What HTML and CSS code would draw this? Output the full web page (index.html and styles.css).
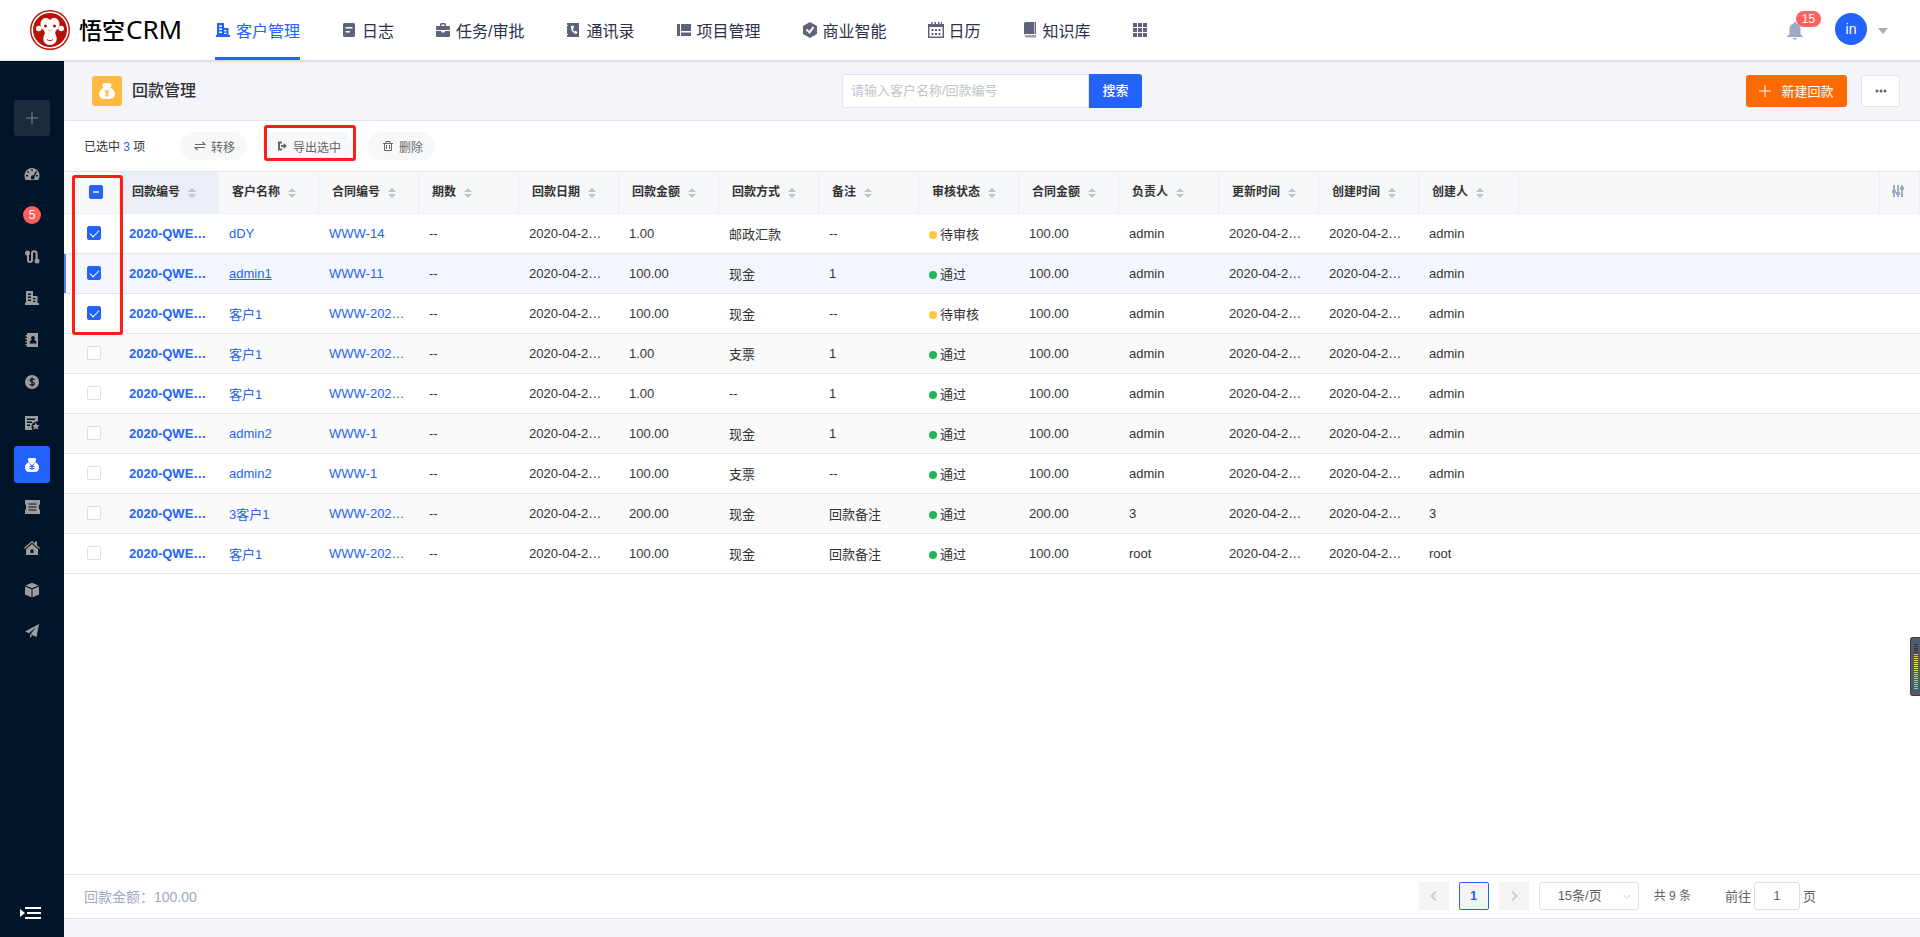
FILE: index.html
```html
<!DOCTYPE html>
<html lang="zh-CN">
<head>
  <meta charset="UTF-8">
  <title>回款管理 - 悟空CRM</title>
  <meta name="viewport" content="width=device-width, initial-scale=1.0">
  <link rel="stylesheet" href="styles.css">
</head>
<body>
  <header class="navbar">
    <a class="logo" href="#">
      <svg class="logo-img" viewBox="0 0 40 40">
        <circle cx="20" cy="20" r="20" fill="#b81208"/>
        <circle cx="20" cy="20" r="18.6" fill="#fff"/>
        <circle cx="20" cy="20" r="17" fill="#b81208"/>
        <circle cx="8.8" cy="18.5" r="2.8" fill="#fff"/>
        <circle cx="31.2" cy="18.5" r="2.8" fill="#fff"/>
        <path d="M20 10c-2-2.600-5.500-2.600-7.600-.6-2.600 2.600-2.400 7 0 9.600 1.500 1.500 2.600 2.500 2.400 4.200-.2 1.500-1.500 2.800-1.500 5.300 0 4 3 6.500 6.700 6.500s6.700-2.500 6.700-6.500c0-2.500-1.300-3.800-1.500-5.300-.2-1.700.9-2.700 2.400-4.200 2.400-2.600 2.600-7 0-9.600-2.100-2-5.600-2-7.600.6z" fill="#fff"/>
        <circle cx="15.500" cy="16" r="1.500" fill="#b81208"/>
        <circle cx="24.500" cy="16" r="1.500" fill="#b81208"/>
        <path d="M18.700 20.200l.7.5M21.300 20.200l-.7.500M17 29.500c1.600 1.600 4.400 1.600 6 0" fill="none" stroke="#b81208"/>
      </svg>
      <span class="logo-cn">悟空</span><span class="logo-en">CRM</span>
    </a>
    <nav class="nav">
      <a class="nav-item active" href="#">
        <svg class="nav-icon" viewBox="0 0 16 16" fill="currentColor"><path fill-rule="evenodd" d="M2 1h7v5h4.500v7H15v2H1v-2h1zM4 3.500V5h3V3.500zm0 3V8h3V6.500zm0 3V11h3V9.500zM9 8v1.200h2.500V8zm0 2.800V12h2.500v-1.200z"/></svg>
        客户管理
      </a>
      <a class="nav-item" href="#">
        <svg class="nav-icon" viewBox="0 0 16 16" fill="currentColor"><path fill-rule="evenodd" d="M3.500 1h9A1.500 1.500 0 0 1 14 2.500v11a1.500 1.500 0 0 1-1.500 1.500h-9A1.500 1.500 0 0 1 2 13.500v-11A1.500 1.500 0 0 1 3.500 1zM4.500 5v1.500h7V5zm0 4v1.500H9V9z"/></svg>
        日志
      </a>
      <a class="nav-item" href="#">
        <svg class="nav-icon" viewBox="0 0 16 16" fill="currentColor"><path fill-rule="evenodd" d="M5 4V2.500A1.500 1.500 0 0 1 6.500 1h3A1.500 1.500 0 0 1 11 2.500V4h3a1 1 0 0 1 1 1v3H1V5a1 1 0 0 1 1-1zm1.500 0h3V2.500h-3zM1 9h4.500l2.500 2 2.500-2H15v5a1 1 0 0 1-1 1H2a1 1 0 0 1-1-1z"/></svg>
        任务/审批
      </a>
      <a class="nav-item" href="#">
        <svg class="nav-icon" viewBox="0 0 16 16" fill="currentColor"><path fill-rule="evenodd" d="M2 1h12v14H2v-2h1v-1H2V4h1V3H2zm4 3c-.5 4 2 7.500 5.500 8l1-2-2-1.200-1 .7C8.500 8.700 8 7.800 8 6.500l1-.5-.5-2.500z"/></svg>
        通讯录
      </a>
      <a class="nav-item" href="#">
        <svg class="nav-icon" viewBox="0 0 16 16" fill="currentColor"><path d="M1 2h3v12H1zM5 2h10v7H5zM5 10.500h10V14H5z"/></svg>
        项目管理
      </a>
      <a class="nav-item" href="#">
        <svg class="nav-icon" viewBox="0 0 16 16"><path d="M8 0l7 4v8l-7 4-7-4V4z" fill="currentColor"/><path d="M4.500 7.500l3 3 4-5.500" fill="none" stroke="#fff" stroke-width="2"/></svg>
        商业智能
      </a>
      <a class="nav-item" href="#">
        <svg class="nav-icon" viewBox="0 0 16 16" fill="currentColor"><path fill-rule="evenodd" d="M0 2h3V0h1.500v2h2V0H8v2h2V0h1.500v2H13V0h1v2h2v14H0zm1.500 3v9.500h13V5z"/><path d="M3.500 7h2v2h-2zM7 7h2v2H7zM10.500 7h2v2h-2zM3.500 11h2v2h-2zM7 11h2v2H7zM10.500 11h2v2h-2z"/></svg>
        日历
      </a>
      <a class="nav-item" href="#">
        <svg class="nav-icon" viewBox="0 0 16 16" fill="currentColor"><path d="M3.500 0H12v12H4c-.8 0-1.500.2-2 .6V1.500A1.500 1.500 0 0 1 3.500 0zM12.600 0H14v12h-1.400z"/><path d="M14 13v2.500H3.800a1.300 1.300 0 0 1 0-2.500z" opacity=".6"/></svg>
        知识库
      </a>
      <a class="nav-item" href="#" aria-label="更多应用">
        <svg class="nav-icon" viewBox="0 0 16 16" fill="currentColor"><path d="M1 1h4v4H1zM6 1h4v4H6zM11 1h4v4h-4zM1 6h4v4H1zM6 6h4v4H6zM11 6h4v4h-4zM1 11h4v4H1zM6 11h4v4H6zM11 11h4v4h-4z"/></svg>
      </a>
    </nav>
    <div class="user">
      <button class="bell" aria-label="消息">
        <svg viewBox="0 0 16 18" width="16" height="18" fill="currentColor"><path d="M8 0c1 0 1.500.8 1.500 1.500C12 2.200 13.500 4 13.500 7v5l2.500 2.500v.5H0v-.5L2.500 12V7c0-3 1.500-4.800 4-5.500C6.500.8 7 0 8 0zM5.500 16h5L9 17.500H7z"/></svg>
        <span class="badge">15</span>
      </button>
      <button class="avatar">in</button>
      <i class="caret"></i>
    </div>
  </header>

  <div class="layout">
    <aside class="sidebar">
      <button class="side-add" aria-label="新建">
        <svg viewBox="0 0 12 12" width="12" height="12" fill="none" stroke="currentColor"><path d="M6 0v12M0 6h12"/></svg>
      </button>
      <nav class="side-list">
        <a class="side-item" href="#" aria-label="仪表盘"><svg viewBox="0 0 16 16" fill="currentColor"><path fill-rule="evenodd" d="M8 2a7.500 7.500 0 0 1 7.500 7.500c0 1.600-.4 3-1.200 4.500H1.700A8.500 8.500 0 0 1 .5 9.500 7.500 7.500 0 0 1 8 2zM7.200 3.500V5h1.600V3.500zM4 5L3 6l1.200 1.200 1-1zm8 0l-2.500 4.500a2 2 0 1 0 1 .8L13 6zM2 9v1.500h2V9zm10 0v1.500h2V9z"/></svg></a>
        <a class="side-item" href="#" aria-label="待办事项"><span class="side-badge">5</span></a>
        <a class="side-item" href="#" aria-label="线索"><svg viewBox="0 0 16 16" fill="none" stroke="currentColor" stroke-width="2"><path d="M4 3v8a2 2 0 0 0 4 0V4.500a2.300 2.300 0 0 1 4.600 0V12"/><circle cx="3.500" cy="4" r="1.500" fill="currentColor"/><circle cx="13" cy="12" r="1.500" fill="currentColor"/></svg></a>
        <a class="side-item" href="#" aria-label="客户"><svg viewBox="0 0 16 16" fill="currentColor"><path fill-rule="evenodd" d="M2 1h7v5h4.500v7H15v2H1v-2h1zM4 3.500V5h3V3.500zm0 3V8h3V6.500zm0 3V11h3V9.500zM9 8v1.200h2.500V8zm0 2.800V12h2.500v-1.200z"/></svg></a>
        <a class="side-item" href="#" aria-label="联系人"><svg viewBox="0 0 16 16" fill="currentColor"><path fill-rule="evenodd" d="M3 1h11v14H3v-1.500H1.500V12H3v-1.500H1.500V9H3V7.500H1.500V6H3V4.500H1.500V3H3zm6 3a2 2 0 0 0-1 3.700C6.500 8.200 5.500 9.500 5.500 11.500h7c0-2-1-3.300-2.500-3.800A2 2 0 0 0 9 4z"/></svg></a>
        <a class="side-item" href="#" aria-label="商机"><svg viewBox="0 0 16 16"><circle cx="8" cy="8" r="7" fill="currentColor"/><path d="M10.500 5.800C9.500 4.500 6 4.500 6 6.300S10.500 7.800 10.500 9.700 6.500 11.500 5.500 10M8 3.200v9.600" fill="none" stroke="#001529" stroke-width="1.200"/></svg></a>
        <a class="side-item" href="#" aria-label="合同"><svg viewBox="0 0 16 16" fill="currentColor"><path fill-rule="evenodd" d="M1 1h13v5.500c-3.500 0-6.500 2-6.500 5 0 1.200.3 2.500 1 3.500H1zm2 2.500V5h8V3.500zm0 3V8h5V6.500zm0 3V11h3V9.500z"/><path d="M11.800 7.500l1.200 2.400 2.700.3-2 1.800.6 2.700-2.500-1.400-2.500 1.400.6-2.700-1.500-1.800 2.200-.3z"/></svg></a>
        <a class="side-item active" href="#" aria-label="回款"><svg viewBox="0 0 16 16"><path d="M4 1.500C5 .8 11 .8 12 1.500v2L11 5c2.500 1 4 3.200 4 5.500 0 3-2 4.500-4 4.500H5c-2 0-4-1.500-4-4.500C1 8.200 2.500 6 5 5L4 3.500z" fill="currentColor"/><path d="M5.500 6.500L8 9l2.500-2.500M8 9v4M5.500 9.500h5M5.500 11.500h5" fill="none" stroke="#2362fb"/></svg></a>
        <a class="side-item" href="#" aria-label="发票"><svg viewBox="0 0 16 16" fill="currentColor"><path fill-rule="evenodd" d="M1 1h15v4l-1 1v4l1 1v4H1v-4l1-1V6L1 5zM4.500 4.500v1h8v-1zm0 3v1h8v-1zm0 3v1h8v-1z"/></svg></a>
        <a class="side-item" href="#" aria-label="公海"><svg viewBox="0 0 16 16" fill="currentColor"><path d="M8 .8l3 2.700V1.500h2v3.800l3 2.700-.8.900L8 2.500.8 8.900 0 8z"/><path fill-rule="evenodd" d="M8 4l6 5.300V15H2V9.300zM6.500 9.500v3.500h3V9.500z"/></svg></a>
        <a class="side-item" href="#" aria-label="产品"><svg viewBox="0 0 16 16" fill="currentColor"><path d="M8 .8l6.500 2.700L8 6.200 1.500 3.500zM1 4.500l6.500 2.800v8L1 12.500zM15 4.500L8.500 7.300v8l6.500-2.800z"/></svg></a>
        <a class="side-item" href="#" aria-label="营销"><svg viewBox="0 0 16 16" fill="currentColor"><path d="M15 1L1 8.500l4 1.700 7-6-5.500 7 6 2.800zM6 11.500V15l2.200-2.600z"/></svg></a>
      </nav>
      <button class="side-toggle" aria-label="展开菜单">
        <svg viewBox="0 0 22 12" width="22" height="12" fill="currentColor"><path d="M0 2l5 4-5 4zM5 0h16v2H5zM7 5h14v2H7zM5 10h16v2H5z"/></svg>
      </button>
    </aside>

    <main class="main">
      <div class="page-head">
        <div class="page-title">
          <span class="title-icon">
            <svg viewBox="0 0 16 16" width="18" height="18"><path d="M4 1.500C5 .8 11 .8 12 1.500v2L11 5c2.500 1 4 3.200 4 5.500 0 3-2 4.500-4 4.500H5c-2 0-4-1.500-4-4.500C1 8.200 2.500 6 5 5L4 3.500z" fill="#fff"/><path d="M6 7l2 2 2-2M8 9v4M6 9.500h4M6 11.500h4" fill="none" stroke="#ffb940"/></svg>
          </span>
          <h1>回款管理</h1>
        </div>
        <form class="search">
          <input type="text" placeholder="请输入客户名称/回款编号" aria-label="搜索回款">
          <button type="button">搜索</button>
        </form>
        <div class="page-actions">
          <button class="btn-primary">
            <svg viewBox="0 0 12 12" width="12" height="12" fill="none" stroke="currentColor"><path d="M6 0v12M0 6h12"/></svg>
            新建回款
          </button>
          <button class="btn-more" aria-label="更多">
            <svg viewBox="0 0 12 4" width="12" height="4" fill="currentColor"><circle cx="2" cy="2" r="1.500"/><circle cx="6" cy="2" r="1.500"/><circle cx="10" cy="2" r="1.500"/></svg>
          </button>
        </div>
      </div>

      <section class="content">
        <div class="toolbar">
          <div class="selected">已选中 <b>3</b> 项</div>
          <button class="tool-btn">
            <svg viewBox="0 0 12 12" fill="none" stroke="currentColor" stroke-width="1.200"><path d="M1 4.500h10L8.500 2M11 7.500H1L3.500 10"/></svg>
            转移
          </button>
          <button class="tool-btn marked">
            <svg viewBox="0 0 12 12" fill="currentColor"><path d="M6 1.500H2v9h4v-2H4v-5h2zM7.500 3L11 6 7.500 9V7H5V5h2.500z"/></svg>
            导出选中
          </button>
          <button class="tool-btn">
            <svg viewBox="0 0 12 12" fill="none" stroke="currentColor"><path d="M1 3.500h10M4 3V1.500h4V3M2.500 3.500v7h7v-7M4.500 5v4M7.500 5v4"/></svg>
            删除
          </button>
        </div>

        <div class="table-wrap">
          <table class="table">
            <colgroup>
              <col class="col-check">
              <col span="14" class="col-data">
              <col>
              <col class="col-set">
            </colgroup>
            <thead>
              <tr>
                <th><input type="checkbox" class="check part" aria-label="全选"></th>
                <th class="sorted">回款编号<button class="sort" aria-label="排序"></button></th>
                <th>客户名称<button class="sort" aria-label="排序"></button></th>
                <th>合同编号<button class="sort" aria-label="排序"></button></th>
                <th>期数<button class="sort" aria-label="排序"></button></th>
                <th>回款日期<button class="sort" aria-label="排序"></button></th>
                <th>回款金额<button class="sort" aria-label="排序"></button></th>
                <th>回款方式<button class="sort" aria-label="排序"></button></th>
                <th>备注<button class="sort" aria-label="排序"></button></th>
                <th>审核状态<button class="sort" aria-label="排序"></button></th>
                <th>合同金额<button class="sort" aria-label="排序"></button></th>
                <th>负责人<button class="sort" aria-label="排序"></button></th>
                <th>更新时间<button class="sort" aria-label="排序"></button></th>
                <th>创建时间<button class="sort" aria-label="排序"></button></th>
                <th>创建人<button class="sort" aria-label="排序"></button></th>
                <th></th>
                <th class="set-cell">
                  <button class="set-btn" aria-label="字段设置">
                    <svg viewBox="0 0 12 12" width="12" height="12" fill="currentColor"><path d="M1 0h2v12H1zM5 0h2v12H5zM9 0h2v12H9zM0 5h4v3H0zM4 7h4v3H4zM8 2h4v3H8z"/></svg>
                  </button>
                </th>
              </tr>
            </thead>
            <tbody>
              <tr>
                <td><input type="checkbox" class="check" aria-label="选择" checked></td>
                <td><a href="#">2020-QWE…</a></td><td><a href="#">dDY</a></td><td><a href="#">WWW-14</a></td>
                <td>--</td><td>2020-04-2…</td><td>1.00</td><td>邮政汇款</td><td>--</td>
                <td><i class="dot wait"></i>待审核</td><td>100.00</td><td>admin</td>
                <td>2020-04-2…</td><td>2020-04-2…</td><td>admin</td><td></td><td></td>
              </tr>
              <tr class="hover">
                <td><input type="checkbox" class="check" aria-label="选择" checked></td>
                <td><a href="#">2020-QWE…</a></td><td><a class="underline" href="#">admin1</a></td><td><a href="#">WWW-11</a></td>
                <td>--</td><td>2020-04-2…</td><td>100.00</td><td>现金</td><td>1</td>
                <td><i class="dot pass"></i>通过</td><td>100.00</td><td>admin</td>
                <td>2020-04-2…</td><td>2020-04-2…</td><td>admin</td><td></td><td></td>
              </tr>
              <tr>
                <td><input type="checkbox" class="check" aria-label="选择" checked></td>
                <td><a href="#">2020-QWE…</a></td><td><a href="#">客户1</a></td><td><a href="#">WWW-202…</a></td>
                <td>--</td><td>2020-04-2…</td><td>100.00</td><td>现金</td><td>--</td>
                <td><i class="dot wait"></i>待审核</td><td>100.00</td><td>admin</td>
                <td>2020-04-2…</td><td>2020-04-2…</td><td>admin</td><td></td><td></td>
              </tr>
              <tr>
                <td><input type="checkbox" class="check" aria-label="选择"></td>
                <td><a href="#">2020-QWE…</a></td><td><a href="#">客户1</a></td><td><a href="#">WWW-202…</a></td>
                <td>--</td><td>2020-04-2…</td><td>1.00</td><td>支票</td><td>1</td>
                <td><i class="dot pass"></i>通过</td><td>100.00</td><td>admin</td>
                <td>2020-04-2…</td><td>2020-04-2…</td><td>admin</td><td></td><td></td>
              </tr>
              <tr>
                <td><input type="checkbox" class="check" aria-label="选择"></td>
                <td><a href="#">2020-QWE…</a></td><td><a href="#">客户1</a></td><td><a href="#">WWW-202…</a></td>
                <td>--</td><td>2020-04-2…</td><td>1.00</td><td>--</td><td>1</td>
                <td><i class="dot pass"></i>通过</td><td>100.00</td><td>admin</td>
                <td>2020-04-2…</td><td>2020-04-2…</td><td>admin</td><td></td><td></td>
              </tr>
              <tr>
                <td><input type="checkbox" class="check" aria-label="选择"></td>
                <td><a href="#">2020-QWE…</a></td><td><a href="#">admin2</a></td><td><a href="#">WWW-1</a></td>
                <td>--</td><td>2020-04-2…</td><td>100.00</td><td>现金</td><td>1</td>
                <td><i class="dot pass"></i>通过</td><td>100.00</td><td>admin</td>
                <td>2020-04-2…</td><td>2020-04-2…</td><td>admin</td><td></td><td></td>
              </tr>
              <tr>
                <td><input type="checkbox" class="check" aria-label="选择"></td>
                <td><a href="#">2020-QWE…</a></td><td><a href="#">admin2</a></td><td><a href="#">WWW-1</a></td>
                <td>--</td><td>2020-04-2…</td><td>100.00</td><td>支票</td><td>--</td>
                <td><i class="dot pass"></i>通过</td><td>100.00</td><td>admin</td>
                <td>2020-04-2…</td><td>2020-04-2…</td><td>admin</td><td></td><td></td>
              </tr>
              <tr>
                <td><input type="checkbox" class="check" aria-label="选择"></td>
                <td><a href="#">2020-QWE…</a></td><td><a href="#">3客户1</a></td><td><a href="#">WWW-202…</a></td>
                <td>--</td><td>2020-04-2…</td><td>200.00</td><td>现金</td><td>回款备注</td>
                <td><i class="dot pass"></i>通过</td><td>200.00</td><td>3</td>
                <td>2020-04-2…</td><td>2020-04-2…</td><td>3</td><td></td><td></td>
              </tr>
              <tr>
                <td><input type="checkbox" class="check" aria-label="选择"></td>
                <td><a href="#">2020-QWE…</a></td><td><a href="#">客户1</a></td><td><a href="#">WWW-202…</a></td>
                <td>--</td><td>2020-04-2…</td><td>100.00</td><td>现金</td><td>回款备注</td>
                <td><i class="dot pass"></i>通过</td><td>100.00</td><td>root</td>
                <td>2020-04-2…</td><td>2020-04-2…</td><td>root</td><td></td><td></td>
              </tr>
            </tbody>
          </table>
          <div class="mark-box"></div>
        </div>

        <footer class="table-foot">
          <span class="sum">回款金额：100.00</span>
          <div class="pager">
            <button class="page-btn" aria-label="上一页" disabled>
              <svg viewBox="0 0 8 12" width="8" height="12" fill="none" stroke="currentColor" stroke-width="1.500"><path d="M6 1.500L1.500 6 6 10.500"/></svg>
            </button>
            <button class="page-btn current">1</button>
            <button class="page-btn" aria-label="下一页" disabled>
              <svg viewBox="0 0 8 12" width="8" height="12" fill="none" stroke="currentColor" stroke-width="1.500"><path d="M2 1.500L6.500 6 2 10.500"/></svg>
            </button>
            <div class="page-size">
              <select aria-label="每页条数">
                <option>15条/页</option>
              </select>
              <svg viewBox="0 0 8 6" width="8" height="6" fill="none" stroke="currentColor"><path d="M.5 1L4 4.500 7.500 1"/></svg>
            </div>
            <span class="total">共 9 条</span>
            <label class="jump">前往 <input type="text" value="1"> 页</label>
          </div>
        </footer>
      </section>
    </main>
  </div>

  <div class="meter"></div>
</body>
</html>
```
FILE: styles.css
```css
* {
  box-sizing: border-box;
}

body {
  margin: 0;
  height: 100vh;
  display: flex;
  flex-direction: column;
  overflow: hidden;
  font-family: "Liberation Sans", "Noto Sans CJK SC", sans-serif;
  font-size: 13px;
  color: #333;
  background-color: #f4f5fa;
}

a {
  color: #2362fb;
  text-decoration: none;
}

button,
input,
select {
  font-family: inherit;
  font-size: 13px;
  margin: 0;
}

button {
  display: flex;
  align-items: center;
  justify-content: center;
  padding: 0;
  border: none;
  background: none;
}

/* top bar */
.navbar {
  position: relative;
  z-index: 2;
  display: flex;
  flex: none;
  height: 61px;
  padding: 0 32px 0 30px;
  background-color: #fff;
  border-bottom: 1px solid #dcdfe6;
  box-shadow: 0 1px 2px rgba(0, 0, 0, .1);
}

.logo {
  display: flex;
  align-items: center;
  width: 185px;
  color: #000;
}

.logo-img {
  width: 40px;
  height: 40px;
  margin-right: 9px;
}

.logo-cn,
.logo-en {
  padding-bottom: 2px;
}

.logo-cn {
  font-size: 23px;
  font-weight: 500;
}

.logo-en {
  margin-left: 1px;
  font-family: "Noto Sans", sans-serif;
  font-size: 26px;
}

.nav {
  display: flex;
  flex: 1;
  gap: 41px;
}

.nav-item {
  display: flex;
  align-items: center;
  height: 60px;
  padding-top: 5px;
  padding-bottom: 2px;
  font-size: 16px;
  color: #2a304d;
  border-bottom: 3px solid transparent;
}

.nav-icon {
  width: 16px;
  height: 16px;
  margin-right: 5px;
  color: #5e6379;
}

.nav-item.active,
.nav-item.active .nav-icon {
  color: #2362fb;
}

.nav-item.active {
  border-bottom-color: #2362fb;
}

.user {
  display: flex;
  align-items: center;
  height: 58px;
}

.bell {
  position: relative;
  margin-right: 32px;
  color: #9da9c5;
}

.bell svg {
  margin-top: 4px;
}

.badge {
  position: absolute;
  left: 9px;
  top: -7px;
  width: 25px;
  border-radius: 8px;
  background-color: #ff6060;
  color: #fff;
  font-size: 12px;
  line-height: 16px;
}

.avatar {
  width: 32px;
  height: 32px;
  margin-right: 11px;
  border-radius: 50%;
  background-color: #2362fb;
  color: #fff;
  font-size: 14px;
}

.caret {
  border: 5px solid transparent;
  border-top: 6px solid #aaa;
  border-bottom: none;
  margin-top: 4px;
}

/* left menu */
.layout {
  display: flex;
  flex: 1;
  min-height: 0;
}

.sidebar {
  display: flex;
  flex-direction: column;
  flex: none;
  width: 64px;
  padding: 39px 14px 18px;
  background-color: #001529;
}

.side-add {
  flex: none;
  width: 36px;
  height: 36px;
  border-radius: 3px;
  background-color: #1c2c3c;
  color: #7c8791;
}

.side-list {
  display: flex;
  flex-direction: column;
  justify-content: space-between;
  flex: none;
  height: 495px;
  margin-top: 19px;
}

.side-item {
  display: flex;
  align-items: center;
  justify-content: center;
  width: 36px;
  height: 37px;
  border-radius: 3px;
  color: #9d9d9d;
}

.side-item svg {
  width: 16px;
  height: 16px;
}

.side-item.active {
  background-color: #2362fb;
  color: #fff;
}

.side-badge {
  width: 18px;
  border-radius: 9px;
  background-color: #ff5c5c;
  color: #fff;
  font-size: 12px;
  line-height: 18px;
  text-align: center;
}

.side-toggle {
  margin-top: auto;
  padding-right: 2px;
  color: #fff;
}

/* page head */
.main {
  display: flex;
  flex-direction: column;
  flex: 1;
  min-width: 0;
  padding-bottom: 18px;
}

.page-head {
  display: grid;
  grid-template-columns: 1fr 300px 1fr;
  align-items: center;
  height: 60px;
  padding: 0 20px;
  border-bottom: 1px solid #e1e4e8;
}

.page-title {
  display: flex;
  align-items: center;
  gap: 10px;
  padding-left: 8px;
}

.page-title h1 {
  margin: 0;
  padding-bottom: 4px;
  font-size: 16px;
  font-weight: 500;
}

.title-icon {
  display: flex;
  align-items: center;
  justify-content: center;
  width: 30px;
  height: 30px;
  border-radius: 3px;
  background-color: #ffb940;
}

.search {
  display: flex;
  height: 34px;
}

.search input {
  flex: 1;
  min-width: 0;
  padding: 0 8px;
  border: 1px solid #e1e4e8;
  border-radius: 3px 0 0 3px;
  outline: none;
}

.search input::placeholder {
  color: #c0c4cc;
}

.search button {
  width: 53px;
  padding-bottom: 2px;
  border-radius: 0 3px 3px 0;
  background-color: #2362fb;
  color: #fff;
  font-weight: 500;
}

.page-actions {
  display: flex;
  justify-content: flex-end;
  gap: 14px;
}

.btn-primary {
  gap: 10px;
  width: 101px;
  height: 32px;
  border-radius: 3px;
  background-color: #ff6a00;
  color: #fff;
}

.btn-more {
  width: 39px;
  height: 32px;
  border: 1px solid #e1e4e8;
  border-radius: 3px;
  background-color: #fff;
  color: #606266;
}

/* list */
.content {
  display: flex;
  flex-direction: column;
  flex: 1;
  background-color: #fff;
  border-bottom: 1px solid #e6e6e6;
}

.toolbar {
  display: flex;
  align-items: center;
  gap: 15px;
  height: 50px;
  padding: 0 20px;
  font-size: 12px;
}

.selected {
  width: 81px;
  padding-bottom: 2px;
}

.selected b {
  color: #2362fb;
  font-weight: normal;
}

.tool-btn {
  position: relative;
  gap: 5px;
  height: 28px;
  padding: 0 12px 0 14px;
  border-radius: 14px;
  background-color: #f6f8fa;
  color: #666;
  font-size: 12px;
}

.tool-btn svg {
  width: 12px;
  height: 12px;
}

.tool-btn.marked::after {
  content: "";
  position: absolute;
  inset: -7px -3px -1px 2px;
  border: 3px solid #ff1e14;
  border-radius: 3px;
}

.table-wrap {
  position: relative;
  flex: 1;
}

.table {
  width: 100%;
  border-collapse: separate;
  border-spacing: 0;
  table-layout: fixed;
  border-top: 1px solid #e1e4e8;
}

.col-check {
  width: 55px;
}

.col-data {
  width: 100px;
}

.col-set {
  width: 40px;
}

.table th {
  height: 42px;
  padding: 0 0 4px 13px;
  border-right: 1px solid #ebeef5;
  border-bottom: 1px solid #ebeef5;
  background-color: #f6f8fa;
  font-size: 12px;
  text-align: left;
  white-space: nowrap;
}

.table th.sorted {
  background-color: #ebeef7;
}

.table td {
  height: 40px;
  padding: 0 10px 1px;
  border-bottom: 1px solid #e6e6e6;
  white-space: nowrap;
}

.table th:first-child {
  padding-left: 25px;
  padding-bottom: 2px;
  border-right: none;
}

.table td:first-child {
  padding-left: 23px;
}

.table tbody tr:nth-child(even) {
  background-color: #fafafa;
}

.table tbody tr.hover {
  background-color: #f3f7fd;
}

.table tr.hover td:first-child {
  box-shadow: inset 2px 0 #5383ed;
}

.table td:nth-child(2) {
  font-weight: bold;
}

.table .underline {
  text-decoration: underline;
}

.sort {
  display: inline-flex;
  flex-direction: column;
  gap: 2px;
  margin-left: 8px;
  vertical-align: middle;
}

.sort::before,
.sort::after {
  content: "";
  border: 4px solid transparent;
}

.sort::before {
  border-top: none;
  border-bottom-color: #c0c4cc;
}

.sort::after {
  border-bottom: none;
  border-top-color: #c0c4cc;
}

.table th.set-cell {
  padding-left: 12px;
}

.set-btn {
  color: #9da9c5;
}

.check {
  display: block;
  appearance: none;
  position: relative;
  width: 14px;
  height: 14px;
  border: 1px solid #dcdfe6;
  border-radius: 2px;
  background-color: #fff;
}

.check:checked,
.check.part {
  border-color: #2362fb;
  background-color: #2362fb;
}

.check:checked::after {
  content: "";
  position: absolute;
  left: 4px;
  top: 1px;
  width: 4px;
  height: 8px;
  border: 1px solid #fff;
  border-left: none;
  border-top: none;
  transform: rotate(45deg);
}

.check.part::after {
  content: "";
  position: absolute;
  left: 3px;
  top: 5px;
  width: 6px;
  height: 2px;
  background-color: #b9ccfe;
}

.dot {
  display: inline-block;
  width: 8px;
  height: 8px;
  margin-right: 3px;
  border-radius: 50%;
}

.dot.wait {
  background-color: #ffc53d;
}

.dot.pass {
  background-color: #20b559;
}

.mark-box {
  position: absolute;
  left: 8px;
  top: 4px;
  width: 51px;
  height: 160px;
  border: 3px solid #ff1e14;
  border-radius: 3px;
  pointer-events: none;
}

/* footer */
.table-foot {
  display: flex;
  align-items: center;
  justify-content: space-between;
  height: 44px;
  padding: 0 104px 2px 20px;
  border-top: 1px solid #e6e6e6;
}

.sum {
  color: #9da9c5;
  font-size: 14px;
}

.pager {
  display: flex;
  align-items: center;
  gap: 10px;
  color: #606266;
}

.page-btn {
  width: 30px;
  height: 28px;
  border-radius: 2px;
  background-color: #f4f4f5;
  color: #c0c4cc;
}

.page-btn.current {
  border: 1px solid #2362fb;
  color: #2362fb;
  font-weight: bold;
}

.page-size {
  position: relative;
  width: 100px;
}

.page-size select {
  width: 100%;
  height: 28px;
  padding: 0 18px;
  border: 1px solid #dcdfe6;
  border-radius: 3px;
  appearance: none;
  background-color: #fff;
  color: #606266;
}

.page-size svg {
  position: absolute;
  right: 8px;
  top: 12px;
  color: #c0c4cc;
}

.total {
  margin-left: 5px;
  margin-right: 24px;
  padding-bottom: 2px;
  font-size: 12px;
}

.jump {
  display: flex;
  align-items: center;
  gap: 3px;
}

.jump input {
  width: 46px;
  height: 28px;
  border: 1px solid #dcdfe6;
  border-radius: 3px;
  color: #606266;
  text-align: center;
}

/* level meter docked on the right edge */
.meter {
  position: fixed;
  right: 0;
  top: 637px;
  z-index: 3;
  width: 10px;
  height: 59px;
  border: 1px solid #3b3e4a;
  border-right: none;
  border-radius: 3px 0 0 3px;
  background-color: #555a6b;
}

.meter::before {
  content: "";
  position: absolute;
  left: 3px;
  top: 6px;
  width: 4px;
  height: 46px;
  background: repeating-linear-gradient(transparent 0 1px, #555a6b 1px 2px), linear-gradient(#30333c 0 10px, #f5a742 10px, #f5e050 20px, #9be060 32px, #4fe0d0);
}
```
